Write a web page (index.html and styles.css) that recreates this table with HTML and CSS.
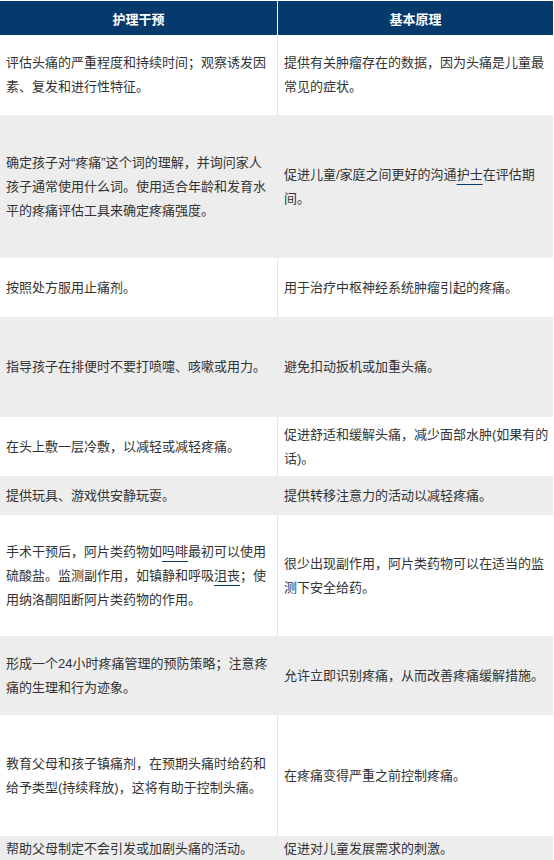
FILE: index.html
```html
<!DOCTYPE html>
<html lang="zh">
<head>
<meta charset="utf-8">
<link rel="stylesheet" href="styles.css">
</head>
<body>
<div class="table">
  <div class="th">护理干预</div>
  <div class="th th-right">基本原理</div>

  <div class="td"><p>评估头痛的严重程度和持续时间；观察诱发因素、复发和进行性特征。</p></div>
  <div class="td td-right"><p>提供有关肿瘤存在的数据，因为头痛是儿童最常见的症状。</p></div>

  <div class="td alt"><p>确定孩子对“疼痛”这个词的理解，并询问家人孩子通常使用什么词。使用适合年龄和发育水平的疼痛评估工具来确定疼痛强度。</p></div>
  <div class="td td-right alt"><p>促进儿童/家庭之间更好的沟通<span class="link">护士</span>在评估期<br>间。</p></div>

  <div class="td"><p>按照处方服用止痛剂。</p></div>
  <div class="td td-right"><p>用于治疗中枢神经系统肿瘤引起的疼痛。</p></div>

  <div class="td alt"><p>指导孩子在排便时不要打喷嚏、咳嗽或用力。</p></div>
  <div class="td td-right alt"><p>避免扣动扳机或加重头痛。</p></div>

  <div class="td"><p>在头上敷一层冷敷，以减轻或减轻疼痛。</p></div>
  <div class="td td-right"><p>促进舒适和缓解头痛，减少面部水肿(如果有的话)。</p></div>

  <div class="td alt"><p>提供玩具、游戏供安静玩耍。</p></div>
  <div class="td td-right alt"><p>提供转移注意力的活动以减轻疼痛。</p></div>

  <div class="td"><p>手术干预后，阿片类药物如<span class="link">吗啡</span>最初可以使用硫酸盐。监测副作用，如镇静和呼吸<span class="link">沮丧</span>；使用纳洛酮阻断阿片类药物的作用。</p></div>
  <div class="td td-right"><p>很少出现副作用，阿片类药物可以在适当的监测下安全给药。</p></div>

  <div class="td alt"><p>形成一个24小时疼痛管理的预防策略；注意疼痛的生理和行为迹象。</p></div>
  <div class="td td-right alt"><p>允许立即识别疼痛，从而改善疼痛缓解措施。</p></div>

  <div class="td"><p>教育父母和孩子镇痛剂，在预期头痛时给药和给予类型(持续释放)，这将有助于控制头痛。</p></div>
  <div class="td td-right"><p>在疼痛变得严重之前控制疼痛。</p></div>

  <div class="td alt"><p>帮助父母制定不会引发或加剧头痛的活动。</p></div>
  <div class="td td-right alt"><p>促进对儿童发展需求的刺激。</p></div>
</div>
</body>
</html>
```

FILE: styles.css
```css
html, body {
  margin: 0;
  padding: 0;
  background: #ffffff;
}

body {
  font-family: "Liberation Sans", "Noto Sans CJK SC", sans-serif;
  font-size: 13px;
  color: #333333;
  overflow: hidden;
}

.table {
  display: grid;
  width: 553px;
  margin-top: 1px;
  grid-template-columns: 278px 275px;
  grid-template-rows: 34px 80px 143px 59px 100px 59px 39px 121px 79px 121px 26px;
}

.th {
  background: #06396c;
  color: #ffffff;
  font-weight: bold;
  display: flex;
  align-items: center;
  justify-content: center;
  border-right: 1px solid #ffffff;
}

.th-right {
  border-right: none;
}

.td {
  display: flex;
  align-items: center;
  line-height: 24px;
  padding: 0 8px 0 6px;
  border-right: 1px solid #e6e6e6;
  background: #ffffff;
}

.td p {
  margin: 0;
}

.td-right {
  border-right: none;
  padding: 0 2px 0 6px;
}

.td.alt {
  background: #ededed;
  border-right-color: #ededed;
}

.link {
  text-decoration: underline;
  text-decoration-color: #06396c;
  text-underline-offset: 5px;
  text-decoration-thickness: 1px;
}
```
